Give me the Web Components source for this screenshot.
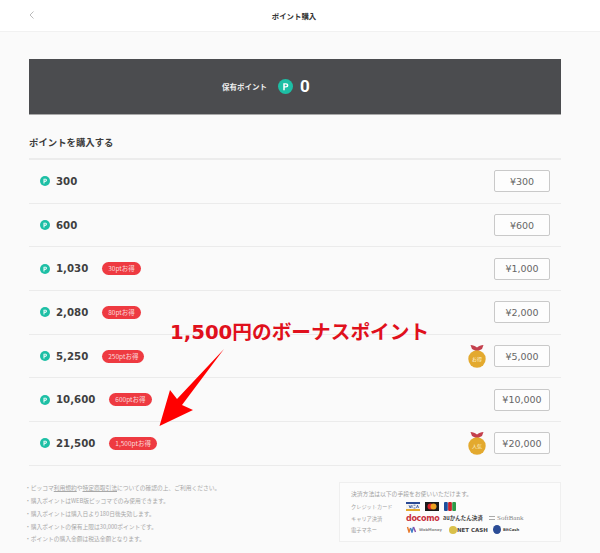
<!DOCTYPE html>
<html lang="ja">
<head>
<meta charset="utf-8">
<title>ポイント購入</title>
<style>
  html, body { margin: 0; height: 553px; overflow: hidden; background: #fafafa; }
  body { font-family: "Noto Sans CJK JP", "Noto Sans", sans-serif; position: relative; }
</style>
</head>
<body>
<page-header>ポイント購入</page-header>
<main-column>
  <point-banner points="0">保有ポイント</point-banner>
  <point-list heading="ポイントを購入する">
    <point-row amount="300" price="¥300"></point-row>
    <point-row amount="600" price="¥600"></point-row>
    <point-row amount="1,030" badge="30pt お得" price="¥1,000"></point-row>
    <point-row amount="2,080" badge="80pt お得" price="¥2,000"></point-row>
    <point-row amount="5,250" badge="250pt お得" medal="お得" price="¥5,000"></point-row>
    <point-row amount="10,600" badge="600pt お得" price="¥10,000"></point-row>
    <point-row amount="21,500" badge="1,500pt お得" medal="人気" price="¥20,000"></point-row>
  </point-list>
  <page-footer></page-footer>
</main-column>
<bonus-note>1,500円のボーナスポイント</bonus-note>

<script>
const P_ICON = `<svg viewBox="0 0 20 20" aria-hidden="true"><circle cx="10" cy="10" r="10" fill="#1dbfa5"/><path d="M7 15V5.5h3.6c2 0 3.2 1.1 3.2 2.9s-1.2 3-3.2 3H9v3.6z M9 9.7h1.4c.9 0 1.4-.5 1.4-1.3s-.5-1.2-1.4-1.2H9z" fill="#fff" fill-rule="evenodd"/></svg>`;

class PageHeader extends HTMLElement {
  connectedCallback() {
    this.attachShadow({ mode: "open" }).innerHTML = `
      <style>
        :host { display: flex; align-items: center; justify-content: center; position: relative; height: 31px; padding-right: 12px; background: #fff; border-bottom: 1px solid #f1f1f1; font-size: 7.4px; font-weight: 700; color: #333; }
        svg { position: absolute; left: 29px; top: 11px; width: 5px; height: 8px; }
      </style>
      <svg viewBox="0 0 5 8"><path d="M4.500.5 1 4l3.500 3.500" fill="none" stroke="#bbb" stroke-width="1"/></svg>
      <slot></slot>`;
  }
}
customElements.define("page-header", PageHeader);

class MainColumn extends HTMLElement {
  connectedCallback() {
    this.attachShadow({ mode: "open" }).innerHTML = `
      <style>:host { display: block; padding: 27px 39px 0 29px; }</style>
      <slot></slot>`;
  }
}
customElements.define("main-column", MainColumn);

class PointBanner extends HTMLElement {
  connectedCallback() {
    const points = this.getAttribute("points");
    this.attachShadow({ mode: "open" }).innerHTML = `
      <style>
        :host { display: flex; align-items: center; justify-content: center; height: 56px; background: #4b4c4f; border-bottom: 1px solid #a9a9a9; box-sizing: border-box; color: #eee; font-size: 7.5px; font-weight: 700; padding: 0 58px 1px 0; }
        svg { width: 15px; height: 15px; margin: 0 7px 0 11px; }
        b { font: 700 17px "Roboto", sans-serif; color: #fff; }
      </style>
      <slot></slot>${P_ICON}<b>${points}</b>`;
  }
}
customElements.define("point-banner", PointBanner);

class PointList extends HTMLElement {
  connectedCallback() {
    this.attachShadow({ mode: "open" }).innerHTML = `
      <style>
        :host { display: block; }
        h2 { margin: 0; height: 45px; box-sizing: border-box; padding-top: 18px; line-height: 18px; font-size: 9.4px; font-weight: 700; color: #3c3c3c; border-bottom: 2px solid #ececec; }
        .rows { display: flex; flex-direction: column; }
      </style>
      <h2>${this.getAttribute("heading")}</h2>
      <div class="rows"><slot></slot></div>`;
  }
}
customElements.define("point-list", PointList);

class PointRow extends HTMLElement {
  connectedCallback() {
    const badge = this.getAttribute("badge");
    const medal = this.getAttribute("medal");
    this.attachShadow({ mode: "open" }).innerHTML = `
      <style>
        :host { display: flex; align-items: center; height: 43.7px; box-sizing: border-box; padding: 0 11px 0 11px; border-bottom: 1px solid #ebebeb; }
        svg.p { width: 10px; height: 10px; margin-right: 6px; }
        .amount { font: 700 10.2px "DejaVu Sans", sans-serif; color: #3f3f3f; }
        .badge { margin-left: 14px; height: 13px; line-height: 13px; padding: 0 6px; border-radius: 7px; background: #ee3a41; color: #fbdcdc; font-size: 6.5px; white-space: nowrap; }
        .medal { margin-left: auto; }
        .price { width: 56px; height: 22px; box-sizing: border-box; display: flex; align-items: center; justify-content: center; border: 1px solid #c9c9c9; border-radius: 2px; background: #fdfdfd; font: 9.5px "DejaVu Sans", sans-serif; color: #666; }
        .medal + .price { margin-left: 8px; }
        .amount + .price, .badge + .price { margin-left: auto; }
      </style>
      ${P_ICON.replace("<svg", '<svg class="p"')}
      <span class="amount">${this.getAttribute("amount")}</span>
      ${badge ? `<span class="badge">${badge.replace(" ", "")}</span>` : ""}
      ${medal ? `<medal-mark class="medal" label="${medal}"></medal-mark>` : ""}
      <span class="price">${this.getAttribute("price")}</span>`;
  }
}
customElements.define("point-row", PointRow);

class MedalMark extends HTMLElement {
  connectedCallback() {
    this.attachShadow({ mode: "open" }).innerHTML = `
      <style>
        :host { display: block; width: 18px; height: 23px; }
        svg { display: block; }
        text { font-size: 5px; fill: #fff3d4; text-anchor: middle; font-family: "Noto Sans CJK JP", sans-serif; }
      </style>
      <svg width="18" height="23" viewBox="0 0 18 23">
        <path d="M2.500 0c2.500.3 4.700 1 6.500 2.500C10.800 1 13 .3 15.500 0L14 4 9 6.500 4 4z" fill="#c4404d"/>
        <circle cx="9" cy="14" r="8.700" fill="#e3a92e"/>
        <text x="9" y="16">${this.getAttribute("label")}</text>
      </svg>`;
  }
}
customElements.define("medal-mark", MedalMark);

class PageFooter extends HTMLElement {
  connectedCallback() {
    this.attachShadow({ mode: "open" }).innerHTML = `
      <style>
        :host { display: flex; justify-content: space-between; align-items: flex-start; margin: 16px 0 0 -4px; }
      </style>
      <note-list></note-list>
      <pay-box></pay-box>`;
  }
}
customElements.define("page-footer", PageFooter);

class NoteList extends HTMLElement {
  connectedCallback() {
    this.attachShadow({ mode: "open" }).innerHTML = `
      <style>
        :host { display: block; color: #a8a8a8; font-size: 5.75px; line-height: 12.9px; }
        ul { margin: 0; padding: 0; list-style: none; }
        li::before { content: "・"; }
        u { text-underline-offset: 1px; }
      </style>
      <ul>
        <li>ピッコマ<u>利用規約</u>や<u>特定商取引法</u>についての確認の上、ご利用ください。</li>
        <li>購入ポイントはWEB版ピッコマでのみ使用できます。</li>
        <li>購入ポイントは購入日より180日後失効します。</li>
        <li>購入ポイントの保有上限は30,000ポイントです。</li>
        <li>ポイントの購入金額は税込金額となります。</li>
      </ul>`;
  }
}
customElements.define("note-list", NoteList);

class PayBox extends HTMLElement {
  connectedCallback() {
    this.attachShadow({ mode: "open" }).innerHTML = `
      <style>
        :host { display: block; width: 222px; height: 60px; box-sizing: border-box; padding: 6px 11px; background: #fcfcfc; border: 1px solid #efefef; color: #a0a0a0; font-size: 5.8px; }
        .title { line-height: 10px; margin-bottom: 2px; }
        .line { display: grid; grid-template-columns: 55px 1fr; align-items: center; height: 11.5px; font-size: 5.200px; }
        .logos { display: flex; align-items: center; gap: 5px; white-space: nowrap; }
        svg { display: block; }
        .docomo { width: 32px; font: 700 8px "DejaVu Sans", sans-serif; color: #c8303c; letter-spacing: -.3px; }
        .au { width: 40px; font-size: 5.500px; font-weight: 700; color: #444; }
        .sb { font: 7px "Liberation Serif", serif; color: #888; display: flex; align-items: center; gap: 2px; margin-left: 1px; }
        .sb i { width: 6px; height: 2px; border-top: 1px solid #aaa; border-bottom: 1px solid #aaa; }
        .wm { width: 37px; font: 700 3.700px "DejaVu Sans", sans-serif; color: #888; display: flex; align-items: center; gap: 2px; }
        .nc { font: 700 5.500px "DejaVu Sans", sans-serif; color: #444; display: flex; align-items: center; gap: 0; margin-left: 1px; }
        .nc i { width: 8px; height: 8px; border-radius: 50%; background: #d9c04a; }
        .bc { font: 700 3.800px "DejaVu Sans", sans-serif; color: #444; display: flex; align-items: center; gap: 2px; }
        .bc i { width: 8px; height: 9px; border-radius: 50%; background: #2b4c96; }
      </style>
      <div class="title">決済方法は以下の手段をお使いいただけます。</div>
      <div class="line"><span>クレジットカード</span><span class="logos" style="gap:5px">
        <svg width="14" height="9" viewBox="0 0 14 9"><rect width="14" height="9" fill="#f4f4f4"/><rect width="14" height="2" fill="#2a4a94"/><rect y="7" width="14" height="2" fill="#e3a92e"/><path d="M3 3.200l1.200 2.800 1-2.800M6 3.200v2.800M7.500 3.200h2M7.500 6h2M10.500 6l1-2.800 1 2.800" fill="none" stroke="#2a4a94" stroke-width=".8"/></svg>
        <svg width="14" height="9" viewBox="0 0 14 9"><rect width="14" height="9" fill="#1a1a1a"/><circle cx="5.500" cy="4.500" r="3" fill="#d8232a"/><circle cx="8.500" cy="4.500" r="3" fill="#f0a11f"/></svg>
        <svg width="12" height="9" viewBox="0 0 12 9"><rect width="3.800" height="9" rx="1" fill="#1c4f9c"/><rect x="4.100" width="3.800" height="9" rx="1" fill="#c8232c"/><rect x="8.200" width="3.800" height="9" rx="1" fill="#2b9a46"/></svg>
      </span></div>
      <div class="line"><span>キャリア決済</span><span class="logos">
        <span class="docomo">docomo</span><span class="au">auかんたん決済</span><span class="sb"><i></i>SoftBank</span>
      </span></div>
      <div class="line"><span>電子マネー</span><span class="logos">
        <span class="wm"><svg width="11" height="7" viewBox="0 0 10 7"><path d="M1 1l1.500 5L4 2" fill="none" stroke="#e8792b" stroke-width="1.400"/><path d="M4 2l1.500 4L7 1" fill="none" stroke="#3a7bc8" stroke-width="1.400"/><path d="M7 1l2 5" stroke="#8a4aa8" stroke-width="1.400"/></svg>WebMoney</span>
        <span class="nc"><i></i>NET CASH</span>
        <span class="bc"><i></i>BitCash</span>
      </span></div>`;
  }
}
customElements.define("pay-box", PayBox);

class BonusNote extends HTMLElement {
  connectedCallback() {
    this.attachShadow({ mode: "open" }).innerHTML = `
      <style>
        :host { display: block; position: absolute; left: 0; top: 0; width: 600px; height: 553px; pointer-events: none; }
        span { position: absolute; left: 170px; top: 319px; line-height: 28px; font-family: "DejaVu Sans", "Noto Sans CJK JP", sans-serif; font-size: 19.7px; font-weight: 700; color: #e0101c; white-space: nowrap; }
        svg { position: absolute; left: 0; top: 0; }
      </style>
      <span><slot></slot></span>
      <svg width="600" height="553" viewBox="0 0 600 553"><path d="M224 349 182 405 193 410 159.500 426 170 390 177 399z" fill="#f00"/></svg>`;
  }
}
customElements.define("bonus-note", BonusNote);
</script>
</body>
</html>
